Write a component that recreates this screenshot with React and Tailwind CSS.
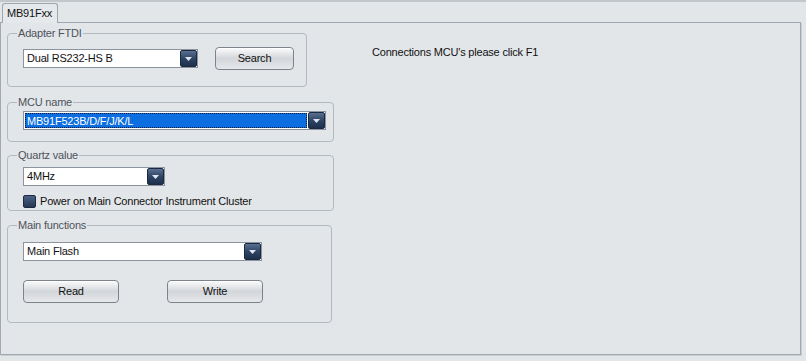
import React from 'react';

const font = { fontFamily: '"Liberation Sans", Arial, sans-serif' };

function Arrow() {
  return (
    <div className="w-[17px] h-full flex items-center justify-center rounded-[2px] border border-[#1b2a40] bg-gradient-to-b from-[#5a7090] via-[#2e4565] to-[#1d2f4a]">
      <svg width="7" height="4" viewBox="0 0 7 4">
        <path d="M0 0 L7 0 L3.5 4 Z" fill="#dfe6ef" />
      </svg>
    </div>
  );
}

function Combo({ value, width, selected }) {
  return (
    <div className={`flex h-[19px] border border-[#8b949e] bg-white ${width}`}>
      <div className="flex-1 p-[1px] min-w-0">
        {selected ? (
          <div className="h-full bg-[#0c6ee0] border border-dotted border-[#0a1a30] text-white pl-[1px] leading-[14px]">
            {value}
          </div>
        ) : (
          <div className="h-full pl-[2px] leading-[15px] text-[#111]">{value}</div>
        )}
      </div>
      <Arrow />
    </div>
  );
}

function Button({ label, width }) {
  return (
    <button className={`h-[23px] ${width} rounded-[4px] border border-[#7c838b] bg-gradient-to-b from-[#fbfbfc] via-[#d3d6da] to-[#e6e8ea] text-[#111] text-[11px] shadow-[inset_0_1px_0_#ffffff]`}>
      {label}
    </button>
  );
}

function Group({ title, className, children }) {
  return (
    <fieldset className={`border border-[#b3b9c1] rounded-[4px] pl-[9px] ${className}`}>
      <legend className="px-[1px] leading-[13px] text-[#4d535b]">{title}</legend>
      <div className="ml-[6px]">{children}</div>
    </fieldset>
  );
}

export default function App() {
  return (
    <div className="w-[806px] h-[361px] bg-[#e3e6e9] text-[11px] tracking-[-0.2px] overflow-hidden border-t-2 border-[#c2c7cc]" style={font}>
      <div className="flex pl-[2px] pt-[1px] h-[20px]">
        <div className="relative z-10 h-[20px] px-[4px] border border-b-0 border-[#9ea6b0] rounded-t-[3px] bg-[#e6e9ec] leading-[18px] text-[#111] w-[56px]">
          MB91Fxx
        </div>
      </div>
      <div className="w-[801px] h-[333px] border border-[#a1a8b1] shadow-[1px_1px_0_#c9ced3] flex pt-[4px] pl-[6px]">
        <div className="flex flex-col w-[327px]">
          <Group title="Adapter FTDI" className="w-[300px] h-[60px] pt-[7px]">
            <div className="flex items-center">
              <Combo value="Dual RS232-HS B" width="w-[175px]" />
              <div className="ml-[17px]">
                <Button label="Search" width="w-[79px]" />
              </div>
            </div>
          </Group>
          <Group title="MCU name" className="w-[327px] h-[46px] mt-[9px] pt-[2px]">
            <Combo value="MB91F523B/D/F/J/K/L" width="w-[303px]" selected />
          </Group>
          <Group title="Quartz value" className="w-[327px] h-[62px] mt-[7px] pt-[5px]">
            <Combo value="4MHz" width="w-[142px]" />
            <div className="flex items-center mt-[9px]">
              <div className="w-[13px] h-[13px] rounded-[2px] border border-[#1c2a3e] bg-gradient-to-b from-[#4b6284] to-[#253852]" />
              <span className="ml-[4px] text-[#111] leading-[13px]">Power on Main Connector Instrument Cluster</span>
            </div>
          </Group>
          <Group title="Main functions" className="w-[325px] h-[104px] mt-[8px] pt-[10px]">
            <Combo value="Main Flash" width="w-[239px]" />
            <div className="flex mt-[19px]">
              <Button label="Read" width="w-[96px]" />
              <div className="ml-[48px]">
                <Button label="Write" width="w-[96px]" />
              </div>
            </div>
          </Group>
        </div>
        <div className="ml-[38px] pt-[19px] text-[#111] leading-[13px]">
          Connections MCU's please click F1
        </div>
      </div>
    </div>
  );
}
